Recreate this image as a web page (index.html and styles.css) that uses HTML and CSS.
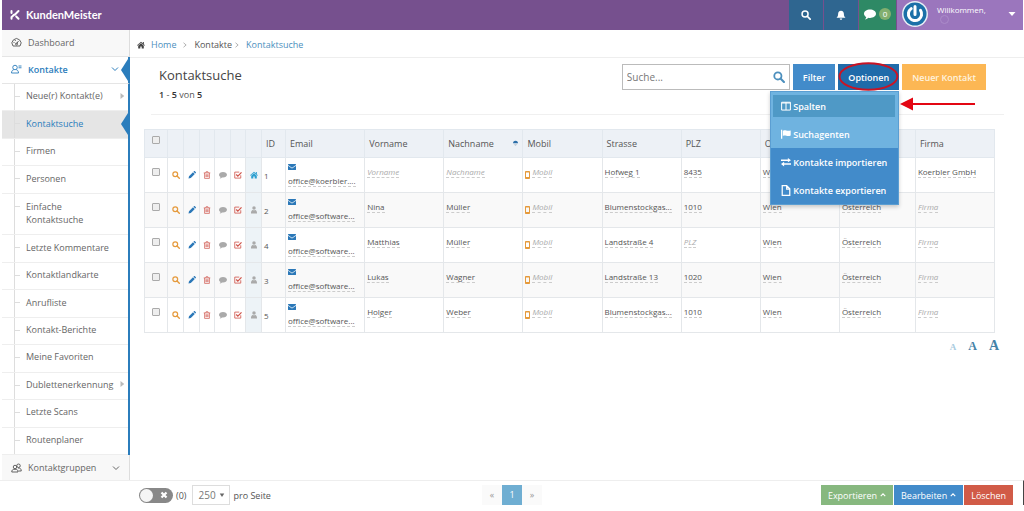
FILE: index.html
```
<!DOCTYPE html>
<html lang="de">
<head>
<meta charset="utf-8">
<title>KundenMeister – Kontaktsuche</title>
<link rel="stylesheet" href="styles.css">
</head>
<body>
<svg class="sprite" aria-hidden="true">
  <symbol id="i-search" viewBox="0 0 16 16"><circle cx="6.5" cy="6.5" r="4.8" fill="none" stroke="currentColor" stroke-width="2.4"/><path d="M10 10l4.6 4.6" stroke="currentColor" stroke-width="2.8" stroke-linecap="round"/></symbol>
  <symbol id="i-pencil" viewBox="0 0 16 16"><path d="M1 15l1-4.6L10 2.4l3.600 3.600L5.600 14zM10.900 1.500l1-1c.6-.6 1.300-.6 1.900 0l1.700 1.700c.6.6.6 1.300 0 1.900l-1 1z" fill="currentColor"/></symbol>
  <symbol id="i-trash" viewBox="0 0 16 16"><path d="M1.500 3.800h13M5.500 3.500l.6-2h3.800l.6 2M3.200 4v10.800h9.600V4M6 6.500v5.700M8 6.500v5.700M10 6.500v5.700" fill="none" stroke="currentColor" stroke-width="1.400"/></symbol>
  <symbol id="i-comment" viewBox="0 0 16 16"><path d="M8 2c4.400 0 8 2.500 8 5.600s-3.600 5.600-8 5.600c-.7 0-1.300 0-1.900-.2C4.900 14.200 3.200 15 1.300 15.200c1-1 1.600-2 1.700-3.200C1.200 11 0 9.400 0 7.600 0 4.500 3.600 2 8 2z" fill="currentColor"/></symbol>
  <symbol id="i-check" viewBox="0 0 16 16"><path d="M13.500 8.500v5.700h-12V2.200h9" fill="none" stroke="currentColor" stroke-width="1.600"/><path d="M4.500 7l3.200 3.400L15 2.600" fill="none" stroke="currentColor" stroke-width="2.400"/></symbol>
  <symbol id="i-home" viewBox="0 0 16 16"><path d="M8 1.500L0 8.400l1 1L8 3.500l7 5.900 1-1-2.300-2V2h-2v2.700zM8 4.600L2.400 9.300V15h4.200v-4h2.800v4h4.200V9.300z" fill="currentColor"/></symbol>
  <symbol id="i-person" viewBox="0 0 16 16"><circle cx="8" cy="4.200" r="3.500" fill="currentColor"/><path d="M2 15c-.3-4.500 1.500-6.500 3.500-7.200 1.600 1.200 3.400 1.200 5 0C12.500 8.500 14.300 10.500 14 15z" fill="currentColor"/></symbol>
  <symbol id="i-mail" viewBox="0 0 16 16"><path d="M0 3c0-.8.5-1.200 1.200-1.200h13.600c.7 0 1.200.4 1.200 1.200v.8L8 9.400 0 3.800zM0 5.500l8 5.600 8-5.600V13c0 .8-.5 1.200-1.200 1.200H1.200C.5 14.200 0 13.800 0 13z" fill="currentColor"/></symbol>
  <symbol id="i-mobile" viewBox="0 0 10 16"><path d="M2 0h6c1.100 0 2 .8 2 2v12c0 1.200-.9 2-2 2H2c-1.100 0-2-.8-2-2V2C0 .8.900 0 2 0zM2 3v9h6V3z" fill="currentColor" fill-rule="evenodd"/></symbol>
  <symbol id="i-down" viewBox="0 0 16 16"><path d="M2 5l6 6 6-6" fill="none" stroke="currentColor" stroke-width="2"/></symbol>
  <symbol id="i-up" viewBox="0 0 16 16"><path d="M2 11l6-6 6 6" fill="none" stroke="currentColor" stroke-width="3"/></symbol>
  <symbol id="i-gt" viewBox="0 0 16 16"><path d="M4 2l7 6-7 6" fill="none" stroke="currentColor" stroke-width="2.400"/></symbol>
  <symbol id="i-tri" viewBox="0 0 16 16"><path d="M4 0l10 8-10 8z" fill="currentColor"/></symbol>
</svg>

<header class="topbar">
  <a class="brand" href="#">
    <svg class="brand-mark" viewBox="0 0 20 20" fill="none" stroke="#fff" stroke-width="4" stroke-linecap="round"><path d="M3 2v4M9.500 9.500L17 2M8 9.500L3 14.500v3M12.500 13L17 17.500"/></svg>
    <span>KundenMeister</span>
  </a>
  <nav class="tools">
    <button class="tool" aria-label="Suche"><svg class="ic10"><use href="#i-search"/></svg></button>
    <button class="tool" aria-label="Hinweise"><svg class="ic10" viewBox="0 0 16 16"><path d="M8 1c3.200 0 4.600 2.300 4.600 5 0 3.500 1 5 2.600 6.500H.8C2.400 11 3.400 9.500 3.400 6c0-2.700 1.400-5 4.600-5zM6 13.500h4c0 1.200-.9 2-2 2s-2-.8-2-2z" fill="#fff"/></svg></button>
    <button class="tool chat" aria-label="Nachrichten"><svg class="ic12"><use href="#i-comment"/></svg><span class="badge">0</span></button>
    <button class="tool user">
      <svg class="avatar" viewBox="0 0 26 26"><circle cx="13" cy="13" r="13" fill="#e8eef6"/><circle cx="13" cy="13" r="11.500" fill="#1b70a8"/><path d="M9.200 7.600a6.600 6.600 0 1 0 9.300 1.700M13 5.500v8" fill="none" stroke="#fff" stroke-width="3" stroke-linecap="round"/></svg>
      <span class="welcome">Willkommen,<span class="ring"></span></span>
      <svg class="ic8" viewBox="0 0 16 16"><path d="M1 4h14l-7 8z" fill="#fff"/></svg>
    </button>
  </nav>
</header>

<div class="middle">
  <aside class="sidebar">
    <a class="top-item" href="#"><svg class="ic11" viewBox="0 0 22 20" fill="none" stroke="#555" stroke-width="1.800"><path d="M4 18a9 9 0 1 1 14 0zM11 14l4-6M5 11h2M8 6l1 2"/><circle cx="11" cy="14" r="2"/></svg><span>Dashboard</span></a>
    <a class="top-item active" href="#"><svg class="ic11" viewBox="0 0 22 20" fill="none" stroke="#2b7dbc" stroke-width="1.800"><circle cx="8" cy="7" r="4.500"/><path d="M1 18c0-4 2-6 4.500-6.600M15 18c0-4-2-6-4.500-6.600M1 18h14M15 4h6M15 7.500h6"/></svg><span>Kontakte</span><svg class="ic8 end"><use href="#i-down"/></svg><i class="notch"></i></a>
    <ul class="submenu">
      <li><a href="#">Neue(r) Kontakt(e)<svg class="ic6 end"><use href="#i-tri"/></svg></a></li>
      <li class="current"><a href="#">Kontaktsuche</a><i class="notch"></i></li>
      <li><a href="#">Firmen</a></li>
      <li><a href="#">Personen</a></li>
      <li class="tall"><a href="#">Einfache<br>Kontaktsuche</a></li>
      <li><a href="#">Letzte Kommentare</a></li>
      <li><a href="#">Kontaktlandkarte</a></li>
      <li><a href="#">Anrufliste</a></li>
      <li><a href="#">Kontakt-Berichte</a></li>
      <li><a href="#">Meine Favoriten</a></li>
      <li><a href="#">Dublettenerkennung<svg class="ic6 end"><use href="#i-tri"/></svg></a></li>
      <li><a href="#">Letzte Scans</a></li>
      <li><a href="#">Routenplaner</a></li>
    </ul>
    <a class="top-item last" href="#"><svg class="ic11" viewBox="0 0 22 20" fill="none" stroke="#555" stroke-width="1.800"><circle cx="8" cy="8" r="3.500"/><circle cx="15" cy="5.500" r="3.500"/><path d="M1.500 18c0-4 2-5.500 6.500-5.500s6 1.500 6 5.500zM14 10c4.500 0 6.500 1.500 6.500 6H15"/></svg><span>Kontaktgruppen</span><svg class="ic8 end"><use href="#i-down"/></svg></a>
  </aside>

  <main class="main">
    <nav class="crumbs">
      <svg class="ic8 dark"><use href="#i-home"/></svg><a href="#">Home</a><svg class="ic6"><use href="#i-gt"/></svg><span>Kontakte</span><svg class="ic6 tight"><use href="#i-gt"/></svg><a href="#">Kontaktsuche</a>
    </nav>

    <div class="head">
      <div class="titles">
        <h1>Kontaktsuche</h1>
        <p><b>1</b> - <b>5</b> von <b>5</b></p>
      </div>
      <div class="actions">
        <label class="search"><input type="text" placeholder="Suche..." aria-label="Suche"><svg class="ic12"><use href="#i-search"/></svg></label>
        <button class="btn blue">Filter</button>
        <div class="dropdown">
          <button class="btn deep">Optionen</button>
          <svg class="ellipse" viewBox="0 0 62 30"><ellipse cx="31" cy="15" rx="29.500" ry="13.500" fill="none" stroke="#c81425" stroke-width="2"/></svg>
          <div class="menu">
            <a class="light hover" href="#"><svg class="ic10" viewBox="0 0 16 16" fill="none" stroke="#fff" stroke-width="1.600"><path d="M1 2h14v12.500H1zM8 2v12.500M1 3.200h14"/></svg>Spalten</a>
            <a class="light" href="#"><svg class="ic10" viewBox="0 0 16 16" fill="#fff"><path d="M0 1h2v14.500H0zM3 3c4-2.500 6 1.500 12.500-.8v8.300C10 13 7 8.700 3 11z"/></svg>Suchagenten</a>
            <a href="#"><svg class="ic10" viewBox="0 0 16 16" fill="#fff"><path d="M0 4h11V1.500L16 5l-5 3.500V6.200H0zM16 10H5V7.500L0 11.200 5 15v-2.700h11z"/></svg>Kontakte importieren</a>
            <a href="#"><svg class="page" viewBox="0 0 14 16" fill="none" stroke="#fff" stroke-width="1.800"><path d="M1.500 1H8l4.500 4.500V15h-11zM8 1v5h4.500"/></svg>Kontakte exportieren</a>
          </div>
          <svg class="arrow" viewBox="0 0 76 14"><path d="M12 7h63" stroke="#e30613" stroke-width="2"/><path d="M0 7l13-6.500v13z" fill="#e30613"/></svg>
        </div>
        <button class="btn orange">Neuer Kontakt</button>
      </div>
    </div>

    <table class="grid">
      <colgroup><col class="c-check"><col class="c-icon"><col class="c-icon"><col class="c-slim"><col class="c-icon"><col class="c-slim"><col class="c-icon"><col class="c-id"><col><col><col><col><col><col><col><col class="c-land"><col></colgroup>
      <thead>
        <tr><th class="ck"><input type="checkbox" aria-label="Alle"></th><th></th><th></th><th></th><th></th><th></th><th></th><th>ID</th><th>Email</th><th>Vorname</th><th><span class="sorted">Nachname<svg class="sort" viewBox="0 0 8 10"><path d="M0 4.500a4 4 0 0 1 8 0z" fill="#2b6ea8"/><path d="M1 6h6L4 9z" fill="#b8c4d0"/></svg></span></th><th>Mobil</th><th>Strasse</th><th>PLZ</th><th>Ort</th><th>Land</th><th>Firma</th></tr>
      </thead>
      <tbody>
        <tr><td class="ck"><input type="checkbox" aria-label="1"></td><td class="ic or"><svg><use href="#i-search"/></svg></td><td class="ic bl"><svg><use href="#i-pencil"/></svg></td><td class="ic rd"><svg><use href="#i-trash"/></svg></td><td class="ic gr"><svg><use href="#i-comment"/></svg></td><td class="ic rd"><svg><use href="#i-check"/></svg></td><td class="ic tint cy"><svg><use href="#i-home"/></svg></td><td class="id">1</td><td class="mail"><svg><use href="#i-mail"/></svg><a href="#">office@koerbler....</a></td><td><a class="empty" href="#">Vorname</a></td><td><a class="empty" href="#">Nachname</a></td><td><svg class="mob"><use href="#i-mobile"/></svg><a class="empty" href="#">Mobil</a></td><td><a href="#">Hofweg 1</a></td><td><a href="#">8435</a></td><td><a href="#">Wolfsberg</a></td><td><a href="#">Österreich</a></td><td><a href="#">Koerbler GmbH</a></td></tr>
        <tr><td class="ck"><input type="checkbox" aria-label="2"></td><td class="ic or"><svg><use href="#i-search"/></svg></td><td class="ic bl"><svg><use href="#i-pencil"/></svg></td><td class="ic rd"><svg><use href="#i-trash"/></svg></td><td class="ic gr"><svg><use href="#i-comment"/></svg></td><td class="ic rd"><svg><use href="#i-check"/></svg></td><td class="ic tint gr"><svg><use href="#i-person"/></svg></td><td class="id">2</td><td class="mail"><svg><use href="#i-mail"/></svg><a href="#">office@software...</a></td><td><a href="#">Nina</a></td><td><a href="#">Müller</a></td><td><svg class="mob"><use href="#i-mobile"/></svg><a class="empty" href="#">Mobil</a></td><td><a href="#">Blumenstockgas...</a></td><td><a href="#">1010</a></td><td><a href="#">Wien</a></td><td><a href="#">Österreich</a></td><td><a class="empty" href="#">Firma</a></td></tr>
        <tr><td class="ck"><input type="checkbox" aria-label="4"></td><td class="ic or"><svg><use href="#i-search"/></svg></td><td class="ic bl"><svg><use href="#i-pencil"/></svg></td><td class="ic rd"><svg><use href="#i-trash"/></svg></td><td class="ic gr"><svg><use href="#i-comment"/></svg></td><td class="ic rd"><svg><use href="#i-check"/></svg></td><td class="ic tint gr"><svg><use href="#i-person"/></svg></td><td class="id">4</td><td class="mail"><svg><use href="#i-mail"/></svg><a href="#">office@software...</a></td><td><a href="#">Matthias</a></td><td><a href="#">Müller</a></td><td><svg class="mob"><use href="#i-mobile"/></svg><a class="empty" href="#">Mobil</a></td><td><a href="#">Landstraße 4</a></td><td><a class="empty" href="#">PLZ</a></td><td><a href="#">Wien</a></td><td><a href="#">Österreich</a></td><td><a class="empty" href="#">Firma</a></td></tr>
        <tr><td class="ck"><input type="checkbox" aria-label="3"></td><td class="ic or"><svg><use href="#i-search"/></svg></td><td class="ic bl"><svg><use href="#i-pencil"/></svg></td><td class="ic rd"><svg><use href="#i-trash"/></svg></td><td class="ic gr"><svg><use href="#i-comment"/></svg></td><td class="ic rd"><svg><use href="#i-check"/></svg></td><td class="ic tint gr"><svg><use href="#i-person"/></svg></td><td class="id">3</td><td class="mail"><svg><use href="#i-mail"/></svg><a href="#">office@software...</a></td><td><a href="#">Lukas</a></td><td><a href="#">Wagner</a></td><td><svg class="mob"><use href="#i-mobile"/></svg><a class="empty" href="#">Mobil</a></td><td><a href="#">Landstraße 13</a></td><td><a href="#">1020</a></td><td><a href="#">Wien</a></td><td><a href="#">Österreich</a></td><td><a class="empty" href="#">Firma</a></td></tr>
        <tr><td class="ck"><input type="checkbox" aria-label="5"></td><td class="ic or"><svg><use href="#i-search"/></svg></td><td class="ic bl"><svg><use href="#i-pencil"/></svg></td><td class="ic rd"><svg><use href="#i-trash"/></svg></td><td class="ic gr"><svg><use href="#i-comment"/></svg></td><td class="ic rd"><svg><use href="#i-check"/></svg></td><td class="ic tint gr"><svg><use href="#i-person"/></svg></td><td class="id">5</td><td class="mail"><svg><use href="#i-mail"/></svg><a href="#">office@software...</a></td><td><a href="#">Holger</a></td><td><a href="#">Weber</a></td><td><svg class="mob"><use href="#i-mobile"/></svg><a class="empty" href="#">Mobil</a></td><td><a href="#">Blumenstockgas...</a></td><td><a href="#">1010</a></td><td><a href="#">Wien</a></td><td><a href="#">Österreich</a></td><td><a class="empty" href="#">Firma</a></td></tr>
      </tbody>
    </table>

    <div class="sizes"><button class="s1">A</button><button class="s2">A</button><button class="s3">A</button></div>
  </main>
</div>

<footer class="bottom">
  <div class="left">
    <label class="switch"><input type="checkbox" aria-label="Alle auswählen"><svg class="ic8" viewBox="0 0 16 16"><path d="M3 3l10 10M13 3L3 13" stroke="#fff" stroke-width="4.500"/></svg></label>
    <span>(0)</span>
    <span class="select"><select aria-label="pro Seite"><option>250</option></select><svg class="ic6" viewBox="0 0 16 16"><path d="M2 4h12l-6 9z" fill="#666"/></svg></span>
    <span class="per">pro Seite</span>
  </div>
  <nav class="pager"><a href="#">«</a><a class="on" href="#">1</a><a href="#">»</a></nav>
  <div class="right">
    <button class="fb green">Exportieren <svg class="ic6"><use href="#i-up"/></svg></button>
    <button class="fb blue">Bearbeiten <svg class="ic6"><use href="#i-up"/></svg></button>
    <button class="fb red">Löschen</button>
  </div>
</footer>
</body>
</html>
```
FILE: styles.css
```
* { box-sizing: border-box; }
body {
  margin: 0;
  min-height: 100vh;
  display: flex;
  flex-direction: column;
  font-family: "Open Sans", "Noto Sans", sans-serif;
  font-size: 9px;
  line-height: 13px;
  color: #555;
  background: #fff;
}
a { color: inherit; text-decoration: none; }
button { font: inherit; border: 0; padding: 0; background: none; cursor: pointer; }
svg { flex: none; display: block; }
.sprite { position: absolute; width: 0; height: 0; }
.ic6 { width: 6px; height: 6px; }
.ic8 { width: 8px; height: 8px; }
.ic10 { width: 10px; height: 10px; }
.ic11 { width: 11px; height: 10px; }
.ic12 { width: 12px; height: 12px; }
.end { margin-left: auto; }

/* top bar */
.topbar {
  display: flex;
  justify-content: space-between;
  height: 30px;
  margin: 0 1px 0 2px;
  background: #76508e;
}
.brand {
  display: flex;
  align-items: center;
  gap: 6px;
  padding-left: 8px;
  font: 700 11px/30px Lato, sans-serif;
  color: #fff;
}
.brand-mark { width: 10px; height: 12px; }
.tools { display: flex; gap: 1px; }
.tool {
  display: flex;
  align-items: center;
  justify-content: center;
  width: 34px;
  color: #fff;
  background: #2f6690;
}
.tool.chat { width: 37px; gap: 3px; padding-bottom: 3px; background: #2e8965; }
.badge {
  width: 12px;
  height: 12px;
  border-radius: 6px;
  font-size: 8px;
  line-height: 12px;
  background: #82af6f;
}
.tool.user {
  width: 126px;
  justify-content: flex-start;
  gap: 9px;
  padding: 0 7px 2px 5px;
  background: #9b76bd;
}
.avatar { width: 26px; height: 26px; }
.user .ic8 { margin-left: auto; }
.welcome { font-size: 8px; line-height: 10px; text-align: left; }
.ring {
  display: block;
  width: 9px;
  height: 9px;
  margin-left: 3px;
  border: 1px solid #ab8bc9;
  border-radius: 5px;
}

/* layout */
.middle { flex: 1; display: flex; }
.sidebar {
  display: flex;
  flex-direction: column;
  flex: none;
  width: 130px;
  padding-left: 2px;
}
.main { flex: 1; min-width: 0; }

/* sidebar */
.top-item {
  position: relative;
  display: flex;
  align-items: center;
  gap: 6px;
  height: 27px;
  padding: 0 9px 2px 9px;
  border-right: 1px solid #ddd;
  border-bottom: 1px solid #e5e5e5;
  background: #f8f8f8;
  color: #666;
}
.top-item.active {
  border-right: 2px solid #2b7dbc;
  background: #fff;
  color: #2b7dbc;
  font-weight: 600;
}
.top-item.last { height: 25px; padding-bottom: 0; border-bottom: 0; }
.notch {
  position: absolute;
  right: 0;
  top: 2px;
  border: solid transparent;
  border-width: 11px 7px 11px 0;
  border-right-color: #2b7dbc;
}
.submenu {
  flex: 1;
  display: flex;
  flex-direction: column;
  margin: 0;
  padding: 0;
  list-style: none;
  border-right: 2px solid #2b7dbc;
}
.submenu li {
  position: relative;
  flex: 1 0 27px;
  display: flex;
  align-items: center;
  padding-left: 12px;
  border-bottom: 1px solid #eee;
}
.submenu li.tall { flex-basis: 41px; }
.submenu a {
  flex: 1;
  align-self: stretch;
  display: flex;
  align-items: center;
  padding: 0 3px 3px 11px;
  border-left: 1px solid #ddd;
  color: #666;
}
.submenu li::before {
  content: "";
  position: absolute;
  left: 13px;
  top: 12px;
  width: 5px;
  border-top: 1px solid #ddd;
}
.submenu .current { background: #e5e5e5; }
.submenu .current a { color: #2b7dbc; }
.submenu svg { color: #bbb; }

/* breadcrumb */
.crumbs {
  display: flex;
  align-items: center;
  gap: 6px;
  height: 28px;
  padding: 2px 7px 0;
  border-bottom: 1px solid #eee;
}
.crumbs a { color: #4c8fbd; }
.crumbs .ic6 { color: #aaa; }
.crumbs .dark { color: #444; }
.crumbs .tight { margin: 0 0 0 -4px; }

/* page head */
.head {
  display: flex;
  justify-content: space-between;
  height: 57px;
  margin: 0 20px 0 21px;
  padding: 6px 18px 0 8px;
  border-bottom: 1px solid #f0f0f0;
}
h1 { margin: 2px 0 4px; font-size: 13px; line-height: 18px; font-weight: 400; color: #444; }
p { margin: 0; }
p b { font-weight: 600; color: #333; }
.actions { display: flex; align-items: flex-start; gap: 3px; }
.search {
  display: flex;
  align-items: center;
  width: 168px;
  height: 26px;
  padding: 0 4px;
  border: 1px solid #bbb;
  color: #4c8fbd;
}
.search input {
  flex: 1;
  min-width: 0;
  padding: 0;
  border: 0;
  outline: 0;
  font: inherit;
  font-size: 10px;
  color: #555;
}
.search input::placeholder { color: #777; }
.btn { height: 26px; padding: 0 10px; font-weight: 600; color: #fff; }
.blue { background: #428bca; }
.deep { background: #1f6baa; }
.orange { background: #fcb754; color: #fff3df; }
.dropdown { position: relative; }
.ellipse { position: absolute; left: 0; top: -3px; width: 100%; height: 31px; }
.arrow { position: absolute; left: 62px; top: 33px; width: 76px; height: 14px; }
.menu {
  position: absolute;
  z-index: 2;
  right: 0;
  top: 27px;
  width: 129px;
  border: 1px solid #5b9ed2;
  background: #428bca;
  box-shadow: 0 2px 4px rgba(0, 0, 0, 0.2);
  color: #fff;
  font-weight: 600;
}
.menu a { display: flex; align-items: center; gap: 2px; height: 28px; padding-left: 10px; }
.menu .light { background: #6fb3e0; }
.menu .hover { background: #4f99c6; border: solid #6fb3e0; border-width: 3px 3px 3px 2px; padding-left: 8px; }
.menu .page { width: 10px; height: 11px; }

/* contact table */
.grid {
  width: calc(100% - 43px);
  margin: 14px 29px 0 14px;
  table-layout: fixed;
  border-collapse: collapse;
  font-size: 8px;
  line-height: 11px;
}
.c-check { width: 23px; }
.c-icon { width: 16px; }
.c-slim { width: 15px; }
.c-id { width: 24px; }
.c-land { width: 76px; }
.grid th, .grid td { padding: 0 2px; border: 1px solid #e4e7ea; text-align: left; white-space: nowrap; }
.grid th {
  height: 28px;
  padding: 0 4px;
  border-color: #e2e8ee;
  background: #edf1f6;
  font-size: 9px;
  font-weight: 400;
}
.grid td { height: 35px; padding-bottom: 6px; }
.grid tbody tr:nth-child(even) { background: #f9f9f9; }
.grid td a { display: inline-block; border-bottom: 1px dashed #ccc; }
.grid .empty { color: #aaa; font-style: italic; }
.grid .ck { text-align: center; padding: 0 2px 7px; }
.grid .ck input {
  appearance: none;
  display: block;
  width: 8px;
  height: 8px;
  margin: 0 auto;
  border: 1px solid #aaa;
  border-radius: 1px;
  background: #eee;
}
.grid .ic { padding: 0; }
.ic svg { width: 8px; height: 8px; margin: 0 auto; }
.or { color: #e59a3c; }
.bl { color: #2b78b8; }
.rd { color: #cf5248; }
.gr { color: #aaa; }
.cy { color: #2c9fd0; }
.tint { background: #edf3f7; }
.grid .id { padding-bottom: 0; }
.grid .mail { padding-bottom: 0; }
.mail svg { width: 8px; height: 8px; margin-bottom: 4px; color: #2b78b8; }
.grid .mob { display: inline-block; width: 5px; height: 8px; margin-right: 2px; vertical-align: -4px; color: #e59a3c; }
.sorted { display: flex; align-items: center; justify-content: space-between; }
.sort { width: 5px; height: 7px; }
.sizes {
  display: flex;
  align-items: baseline;
  justify-content: flex-end;
  gap: 12px;
  margin: 6px 25px 0 0;
  font-family: "Liberation Serif", serif;
  font-weight: 700;
  color: #4583a8;
}
.s1 { font-size: 9px; color: #a9cbe0; }
.s2 { font-size: 12px; color: #4583a8; }
.s3 { font-size: 14px; color: #4583a8; }

/* footer */
.bottom {
  display: grid;
  grid-template-columns: 1fr auto 1fr;
  align-items: start;
  margin-bottom: 6px;
  padding: 4px 10px 0 11px;
  border-top: 1px solid #eee;
  border-right: 1px solid #444;
  color: #555;
}
.left, .right { display: flex; align-items: center; gap: 3px; }
.left { padding-left: 128px; }
.right { justify-content: flex-end; gap: 1px; }
.switch {
  display: flex;
  align-items: center;
  justify-content: space-between;
  width: 34px;
  height: 15px;
  padding: 0 5px 0 1px;
  border-radius: 8px;
  background: #888;
}
.switch input { appearance: none; width: 13px; height: 13px; margin: 0; border-radius: 7px; background: #f5f5f5; }
.select {
  display: flex;
  align-items: center;
  width: 38px;
  height: 20px;
  margin-left: 3px;
  padding: 0 4px 0 5px;
  border: 1px solid #ddd;
}
.select select { appearance: none; flex: 1; min-width: 0; padding: 0; border: 0; font: inherit; font-size: 10px; color: #777; background: none; }
.pager { display: flex; }
.pager a { width: 20px; height: 20px; line-height: 19px; text-align: center; color: #999; background: #fafafa; }
.pager .on { color: #fff; background: #6faed2; }
.fb { display: flex; align-items: center; gap: 3px; height: 20px; padding: 0 7px; color: #fff; }
.green { background: #87b87f; }
.red { background: #d15b47; }
```
